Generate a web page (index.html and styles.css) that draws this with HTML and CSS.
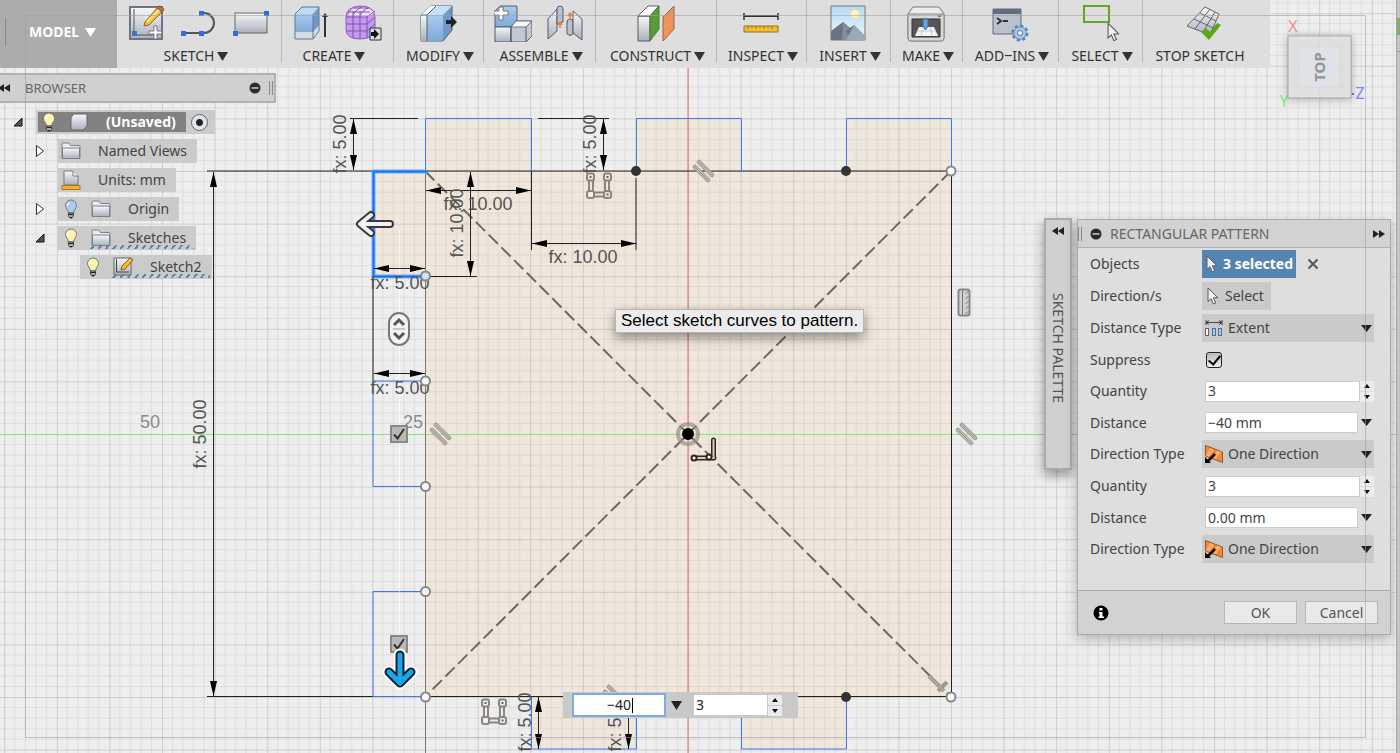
FILE: index.html
```html
<!DOCTYPE html>
<html lang="en">

<head>
    <meta charset="UTF-8">
    <meta name="viewport" content="width=device-width, initial-scale=1.0">
    <title>Sketch - Rectangular Pattern</title>

    <link rel="stylesheet" href="styles.css">
</head>

<body>
    <!-- shared gradients and symbols -->
    <svg class="defs" aria-hidden="true">
        <defs>
            <linearGradient id="steel" x1="0" y1="0" x2="0" y2="1">
                <stop offset="0" stop-color="#f7f8fa" />
                <stop offset="1" stop-color="#a9b0bd" />
            </linearGradient>
            <linearGradient id="blue" x1="0" y1="0" x2="0" y2="1">
                <stop offset="0" stop-color="#a9cbee" />
                <stop offset="1" stop-color="#7fa9d8" />
            </linearGradient>
            <linearGradient id="sky" x1="0" y1="0" x2="0" y2="1">
                <stop offset="0" stop-color="#b5daf5" />
                <stop offset="1" stop-color="#edf7fd" />
            </linearGradient>
            <symbol id="folder" viewBox="0 0 20 18">
                <path d="M1 16.500V2q0-1 1-1h6l1.500 2.500H18q1 0 1 1v12z" fill="#e8ebef" stroke="#7b818b" />
                <path d="M1.500 6h17v10.500h-17z" fill="url(#steel)" stroke="#7b818b" />
            </symbol>
            <symbol id="bulb" viewBox="0 0 14 20">
                <path d="M7 1a5.500 5.500 0 0 0-5.500 5.500C1.500 9.500 4 10.500 4.500 14h5c.5-3.500 3-4.500 3-7.500A5.500 5.500 0 0 0 7 1z" fill="currentColor" stroke="#777" />
                <path d="M5 4q-1.500 1-1.500 3" stroke="#fff" fill="none" stroke-width="1.500" />
                <path d="M4.500 14h5v3.500L8 19H6l-1.500-1.500z" fill="#aaa" stroke="#444" />
                <path d="M5 15.500h4M6 18.500h2" stroke="#222" />
            </symbol>
            <symbol id="pointer" viewBox="0 0 12 18">
                <path d="M1 1v13.500l3-2.800 2.300 5.300 2.400-1-2.300-5.200H11z" fill="#eef0f4" stroke="#55595f" />
            </symbol>
            <symbol id="down" viewBox="0 0 11 9">
                <path d="M0 0h11L5.500 9z" fill="currentColor" />
            </symbol>
            <symbol id="collapse" viewBox="0 0 12 12">
                <circle cx="6" cy="6" r="5.500" fill="#2b2b2b" />
                <path d="M2.500 6h7" stroke="#ccc" stroke-width="1.500" />
            </symbol>
            <symbol id="rewind" viewBox="0 0 12 8">
                <path d="M6 0v8L0 4zM12 0v8L6 4z" fill="#222" />
            </symbol>
            <symbol id="one-direction" viewBox="0 0 20 20">
                <path d="M1.500 1.500L18.500 8V18.500L1.500 12z" fill="#f58634" stroke="#8f5a33" />
                <path d="M6 4l4 1.500-5 7-3-1zM13 6.500l4 1.500-5 7-3-1z" fill="#ffad6c" />
                <path d="M11 10L4 17" stroke="#000" stroke-width="2.500" />
                <path d="M1 13v6h6z" fill="#000" />
            </symbol>
            <symbol id="parallel" viewBox="0 0 26 26">
                <g stroke-linecap="round" fill="none">
                    <path d="M4 8L17 21M8 3L21 16" stroke="#9d9992" stroke-width="4.500" />
                    <path d="M4 8L17 21M8 3L21 16" stroke="#c3bfb8" stroke-width="2.500" />
                    <path d="M4 8L17 21M8 3L21 16" stroke="#99958e" stroke-width="1" />
                </g>
            </symbol>
            <symbol id="rigid" viewBox="0 0 30 30">
                <g fill="none" stroke="#8b867f" stroke-width="2" stroke-linejoin="round">
                    <path d="M5 9v11M9 9v11M21 9v11M25 9v11M10 21.500h10M10 25.500h10" />
                    <rect x="3" y="2.500" width="7" height="7" rx="2" />
                    <rect x="20" y="2.500" width="7" height="7" rx="2" />
                    <rect x="20" y="20" width="7" height="7" rx="2" />
                    <rect x="3" y="20" width="7" height="7" rx="2" fill="#f3f0ec" />
                </g>
                <path d="M5.500 5h2v2h-2zM22.500 5h2v2h-2zM22.500 22.500h2v2h-2z" fill="#666" />
            </symbol>
            <symbol id="suppress" viewBox="0 0 18 18">
                <rect x="1" y="1" width="16" height="16" fill="#b8b8b8" stroke="#888" stroke-width="2" />
                <path d="M4 9.500l3.500 4L14 4" fill="none" stroke="#333" stroke-width="2" />
            </symbol>
            <marker id="tip" viewBox="0 0 15 7" markerWidth="15" markerHeight="7" markerUnits="userSpaceOnUse" refX="15" refY="3.500" orient="auto-start-reverse">
                <path d="M0 0L15 3.500L0 7z" fill="#000" />
            </marker>
            <pattern id="grid" x="688" y="434" width="52.600" height="52.600" patternUnits="userSpaceOnUse">
                <path d="M10.500 0v53M21 0v53M31.600 0v53M42.100 0v53M0 10.500h53M0 21h53M0 31.600h53M0 42.100h53" stroke="#000" stroke-opacity=".07" />
                <path d="M.5 0v53M0 .5h53" stroke="#000" stroke-opacity=".13" />
            </pattern>
        </defs>
    </svg>

    <main class="workspace">
        <!-- sketch canvas -->
        <svg class="canvas" role="img" aria-label="Sketch canvas">
            <path class="profile" d="M425 171V118.500H531V171H636V118.500H741V171H846V118.500H951.500V697H846V749H741V697H636V749H531V697H425V276H373V171z" />
            <rect width="100%" height="100%" fill="url(#grid)" />
            <path class="axis-y" d="M0 434.500H2000" />
            <path class="axis-x" d="M688 0V1200" />

            <g class="diagonals">
                <path d="M425 171L951 697M951 171L425 697" />
            </g>

            <path class="edge-soft" d="M425.500 171V1200" />
            <path class="edge" d="M207 171H951.500V697M207 696.500H951.500M373 276V381" />
            <path class="curve" d="M425.500 171V118.500H531.500V171M636.500 171V118.500H741.500V171M846.500 171V118.500H951.500V171M531.500 697V749H636.500V697M741.500 697V749H846.500V697M425 381H373V486.500H425M425 591.500H373V696.500H425" />
            <path class="guide" d="M399.500 230V650" />
            <path class="picked-glow" d="M427 171.500H373.500V276.500H427" />
            <path class="picked" d="M427 171.500H373.500V276.500H427" />

            <g class="extension">
                <path d="M350 118.500H418M538 118.500H609M425 276.500H477M531.500 171V250M636 178V250" />
            </g>
            <g class="dimension">
                <path d="M213.500 172V696" />
                <path d="M353.500 119V170" />
                <path d="M603.500 119V170" />
                <path d="M426 190.500H531" />
                <path d="M470.500 172V276" />
                <path d="M532 243.500H636" />
                <path d="M374 268.500H425" />
                <path d="M374 373.500H425" />
                <path d="M538.500 697V749" />
                <path d="M628.500 697V749" />
            </g>
            <g class="measure">
                <text x="478" y="210">fx: 10.00</text>
                <text x="583" y="263">fx: 10.00</text>
                <text x="400" y="289">fx: 5.00</text>
                <text x="400" y="394">fx: 5.00</text>
                <text transform="translate(206 434) rotate(-90)">fx: 50.00</text>
                <text transform="translate(346 144) rotate(-90)">fx: 5.00</text>
                <text transform="translate(596 144) rotate(-90)">fx: 5.00</text>
                <text transform="translate(463 223) rotate(-90)">fx: 10.00</text>
                <text transform="translate(531 722) rotate(-90)">fx: 5.00</text>
                <text transform="translate(621 722) rotate(-90)">fx: 5.00</text>
                <text class="tick" x="150" y="428">50</text>
                <text class="tick" x="413" y="428">25</text>
            </g>

            <!-- constraint glyphs -->
            <use href="#parallel" x="691" y="159" width="26" height="26" />
            <use href="#parallel" x="428" y="422" width="26" height="26" />
            <use href="#parallel" x="954" y="422" width="26" height="26" />
            <use href="#parallel" x="601" y="684" width="26" height="26" />
            <use href="#rigid" x="584" y="171" width="30" height="30" />
            <use href="#rigid" x="479" y="697" width="30" height="30" />
            <g fill="none" stroke="#777">
                <rect x="958.500" y="289.500" width="11" height="26" rx="2" fill="#d2d2d2" stroke="#888" stroke-width="2" />
                <path d="M962.500 290v25M965.500 294l3-3M965.500 299l3-3M965.500 304l3-3M965.500 309l3-3M965.500 314l3-3" />
            </g>
            <g fill="none" stroke="#565656">
                <rect x="389" y="313" width="20" height="32" rx="10" fill="#f3f3f3" stroke="#777" stroke-width="2" />
                <path d="M394 325l5-5 5 5M394 333l5 5 5-5" stroke-width="3" />
                <path d="M393 329h12" stroke="#999" />
            </g>
            <path d="M929 676l15 15M938 691l9-9" stroke="#9d9992" stroke-width="4" />
            <path d="M929 676l15 15" stroke="#c6beb4" />

            <!-- origin -->
            <circle cx="688" cy="434" r="10" fill="none" stroke="#969284" stroke-opacity=".7" stroke-width="4" />
            <circle cx="688" cy="434" r="6" fill="#000" />
            <g stroke="#33261f" fill="none" stroke-linecap="round">
                <path d="M694 458h20M713.500 440v18" stroke-width="5" />
                <path d="M694 458h20M713.500 440v18" stroke="#d8cdc3" stroke-width="2" />
                <circle cx="694" cy="458" r="2.500" fill="#fff" stroke-width="2" />
                <circle cx="709" cy="457" r="2.500" fill="#fff" stroke-width="2" />
            </g>

            <g class="node-fixed">
                <circle cx="636" cy="171" r="5" />
                <circle cx="846" cy="171" r="5" />
                <circle cx="636" cy="697" r="5" />
                <circle cx="846" cy="697" r="5" />
            </g>
            <g class="node">
                <circle cx="951" cy="171" r="4.500" />
                <circle cx="951" cy="697" r="4.500" />
                <circle class="node-picked" cx="425.500" cy="276" r="4.500" />
                <circle cx="425.500" cy="381" r="4.500" />
                <circle cx="425.500" cy="486.500" r="4.500" />
                <circle cx="425.500" cy="591.500" r="4.500" />
                <circle cx="425.500" cy="697" r="4.500" />
            </g>

            <!-- manipulators -->
            <use href="#suppress" x="390" y="425" width="18" height="18" />
            <use href="#suppress" x="390" y="635" width="18" height="18" />
            <g class="handle">
                <path class="handle-line" d="M390 224H362M371 215L360 224L371 233" />
                <path class="handle-fill" d="M390 224H362M371 215L360 224L371 233" />
            </g>
            <g class="handle">
                <path class="handle-halo" d="M400 655V680M389 672L400 683L411 672" />
                <path class="active-line" d="M400 655V680M389 672L400 683L411 672" />
                <path class="active-fill" d="M400 655V680M389 672L400 683L411 672" />
            </g>
        </svg>

        <header class="toolbar">
            <button class="workspace-switch"><span class="grip"></span>MODEL <svg width="11" height="9"><use href="#down" /></svg></button>
            <div class="tool-group sketch">
                <div class="tools">
                    <svg width="38" height="38" viewBox="0 0 38 38">
                        <rect x="2" y="3" width="32" height="32" fill="url(#steel)" stroke="#6d7581" stroke-width="2" />
                        <path d="M6 5v26h24" fill="none" stroke="#555" />
                        <path d="M4 27h5v5H4z" fill="#3978c8" />
                        <path d="M17 18L29 4l5 4-13 13-5 1z" fill="#f5bd2c" stroke="#8d6826" />
                        <path d="M29 4l2-2q4 0 5 4l-2 2z" fill="#c3694a" stroke="#84523f" />
                        <path d="M19 18L31 6" stroke="#ffe78a" stroke-width="2" />
                        <path d="M26 22h3v5h5v3h-5v5h-3v-5h-5v-3h5z" fill="#fff" stroke="#777" />
                    </svg>
                    <svg width="38" height="38" viewBox="0 0 38 38">
                        <path d="M4 29h20a10 10 0 0 0 0-20h-4" fill="none" stroke="#555" stroke-width="2" />
                        <path d="M1 27h5v5H1zM19 27h5v5h-5zM19 7h5v5h-5z" fill="#2f6fd0" />
                    </svg>
                    <svg width="38" height="38" viewBox="0 0 38 38">
                        <rect x="3" y="9" width="32" height="20" fill="url(#steel)" stroke="#666" />
                        <path d="M1 27h5v5H1zM32 7h5v5h-5z" fill="#2f6fd0" />
                    </svg>
                </div>
                <button>SKETCH <svg width="11" height="9"><use href="#down" /></svg></button>
            </div>
            <div class="tool-group create">
                <div class="tools">
                    <svg width="38" height="38" viewBox="0 0 38 38">
                        <path d="M3 10l7-7h17v24l-6 8H3z" fill="#7098c6" />
                        <path d="M3 10h18v18H3z" fill="url(#blue)" />
                        <path d="M3 10l7-7h17l-6 7z" fill="#bddaf4" />
                        <path d="M3 28h18l6-7v6l-6 8H3z" fill="#d7dce3" />
                        <path d="M3 10l7-7h17v24l-6 8H3zM21 10v25" fill="none" stroke="#5d7896" />
                        <path d="M33 33V13" stroke="#333" stroke-width="2" />
                        <path d="M30 13l3-4 3 4z" fill="#333" />
                    </svg>
                    <svg width="38" height="38" viewBox="0 0 38 38">
                        <path d="M2 13q0-10 14-11 14 0 15 10v11q0 12-15 12Q2 35 2 25z" fill="#c49aee" stroke="#8a5fba" />
                        <path d="M4 12q3-9 13-9 9 0 13 6l-6 4z" fill="#f0e1fd" />
                        <path d="M2 13h21l8-6M2 20h21l8-7M2 27h21l8-7M9 7v27M16 7v28M23 12v22M9 13q0-6 9-10M16 13q1-7 9-9M4 8h22M10 4h14" fill="none" stroke="#7f52b0" />
                        <path d="M26 24h11v12H26z" fill="#ddd" stroke="#333" />
                        <path d="M27 28h3v-3l5 5-5 5v-3h-3z" fill="#111" />
                    </svg>
                </div>
                <button>CREATE <svg width="11" height="9"><use href="#down" /></svg></button>
            </div>
            <div class="tool-group modify">
                <div class="tools">
                    <svg width="38" height="38" viewBox="0 0 38 38">
                        <path d="M2 11l9-9h22v24l-9 11H2z" fill="#6d9aca" stroke="#52606f" />
                        <path d="M2 11h6v26H2z" fill="url(#steel)" />
                        <path d="M2 11l9-9h6l-9 9z" fill="#fff" />
                        <path d="M8 11h16v26H8z" fill="url(#blue)" />
                        <path d="M8 11l9-9h16l-9 9z" fill="#c7e0f6" />
                        <path d="M8 37V11l9-9M2 11h6" fill="none" stroke="#52606f" />
                        <path d="M27 16h5v-4l6 6-6 6v-4h-5z" fill="#222" />
                    </svg>
                </div>
                <button>MODIFY <svg width="11" height="9"><use href="#down" /></svg></button>
            </div>
            <div class="tool-group assemble">
                <div class="tools">
                    <svg width="38" height="38" viewBox="0 0 38 38">
                        <path d="M1 7l5-5h17v16l-6 5H1z" fill="url(#blue)" stroke="#52606f" />
                        <path d="M1 23h16v15H1z" fill="url(#steel)" stroke="#52606f" />
                        <path d="M17 23l5-6h16v15l-6 6H17z" fill="#c3c9d3" stroke="#52606f" />
                        <path d="M17 23l5-6h16l-6 6z" fill="#f5f6f8" stroke="#777" />
                        <path d="M17 23v15M32 23v15" stroke="#52606f" />
                        <path d="M5 3h4v4h5v4H9v5H5v-5H0V7h5z" fill="#fff" stroke="#777" />
                    </svg>
                    <svg width="38" height="38" viewBox="0 0 38 38">
                        <path d="M2 15l9-10v22L2 35z" fill="url(#steel)" stroke="#555c66" />
                        <path d="M11 5q0-3 3-3t3 3v13l-6 2z" fill="#b8c0cb" stroke="#555c66" />
                        <path d="M21 18q0-3 3-3t3 3v12q-3 3-6 0z" fill="#b8c0cb" stroke="#555c66" />
                        <path d="M27 7l9 8v21l-9-7z" fill="url(#steel)" stroke="#555c66" />
                        <path d="M14 24v-5m-2 2l2-3 2 3M24 16v-6m-2 2l2-3 2 3" fill="none" stroke="#ef7e31" stroke-width="1.500" />
                    </svg>
                </div>
                <button>ASSEMBLE <svg width="11" height="9"><use href="#down" /></svg></button>
            </div>
            <div class="tool-group construct">
                <div class="tools">
                    <svg width="38" height="38" viewBox="0 0 38 38">
                        <path d="M1 12h12v25H1z" fill="url(#steel)" stroke="#555c66" />
                        <path d="M1 12L11 2h11l-9 10z" fill="#fff" stroke="#555c66" />
                        <path d="M13 12l9-10v23l-9 12z" fill="#5b9b3d" stroke="#477c2f" />
                        <path d="M26 13L37 2v23L26 37z" fill="#ef935b" stroke="#9f6042" />
                    </svg>
                </div>
                <button>CONSTRUCT <svg width="11" height="9"><use href="#down" /></svg></button>
            </div>
            <div class="tool-group inspect">
                <div class="tools">
                    <svg width="38" height="38" viewBox="0 0 38 38">
                        <path d="M2 9v7M36 9v7" stroke="#333" stroke-width="1.500" />
                        <path d="M2 12h34" stroke="#333" stroke-width="2" />
                        <path d="M2 22h34v6H2z" fill="#f4be2d" stroke="#98701f" />
                        <path d="M6 22v3M10 22v2M14 22v3M18 22v2M22 22v3M26 22v2M30 22v3" stroke="#98701f" />
                    </svg>
                </div>
                <button>INSPECT <svg width="11" height="9"><use href="#down" /></svg></button>
            </div>
            <div class="tool-group insert">
                <div class="tools">
                    <svg width="38" height="38" viewBox="0 0 38 38">
                        <path d="M2 2h34v34H2z" fill="url(#sky)" stroke="#777" />
                        <circle cx="26" cy="10" r="4.500" fill="#fff5bf" stroke="#fbdc83" />
                        <path d="M2 27l12-9 7 6 4-3 11 11v4H2z" fill="#6b7482" />
                        <path d="M14 18l7 6-4 3 5 9h-9z" fill="#848d9a" />
                        <path d="M17 36l8-15 11 11v4z" fill="#9ba8b6" />
                    </svg>
                </div>
                <button>INSERT <svg width="11" height="9"><use href="#down" /></svg></button>
            </div>
            <div class="tool-group make">
                <div class="tools">
                    <svg width="38" height="38" viewBox="0 0 38 38">
                        <path d="M1 10l5-7h26l5 7v24q0 3-3 3H4q-3 0-3-3z" fill="#ececec" stroke="#777" />
                        <path d="M1 10h36v24q0 3-3 3H4q-3 0-3-3z" fill="#d7d7d7" stroke="#888" />
                        <path d="M5 15h28v18H5z" fill="#555" stroke="#333" />
                        <path d="M12 23h15l4 9H8z" fill="#f2f2f2" />
                        <path d="M10 27h19M16 23l-2 9M23 23l2 9" stroke="#ccc" />
                        <path d="M16 15h5v7l-2.500 4-2.500-4z" fill="#68a5df" stroke="#356b9e" />
                        <path d="M31 12h3" stroke="#48a530" stroke-width="2" />
                    </svg>
                </div>
                <button>MAKE <svg width="11" height="9"><use href="#down" /></svg></button>
            </div>
            <div class="tool-group addins">
                <div class="tools">
                    <svg width="38" height="38" viewBox="0 0 38 38">
                        <path d="M2 5h28v25H2z" fill="#bac1ce" stroke="#626b79" />
                        <path d="M2 5h28v5H2z" fill="#626d7e" />
                        <path d="M6 14l4 3-4 3M12 17h5" fill="none" stroke="#333" stroke-width="2" />
                        <circle cx="29" cy="29" r="7" fill="#93b7dd" stroke="#5b83b1" stroke-width="3" stroke-dasharray="3 2.500" />
                        <circle cx="29" cy="29" r="6" fill="#a9c8e8" stroke="#7399c4" />
                        <circle cx="29" cy="29" r="2.500" fill="#fff" stroke="#4d719b" />
                    </svg>
                </div>
                <button>ADD‒INS <svg width="11" height="9"><use href="#down" /></svg></button>
            </div>
            <div class="tool-group select">
                <div class="tools">
                    <svg width="38" height="38" viewBox="0 0 38 38">
                        <path d="M3 2h25v16H3z" fill="none" stroke="#62a81d" stroke-width="2" />
                        <use href="#pointer" x="26" y="18" width="13" height="20" />
                    </svg>
                </div>
                <button>SELECT <svg width="11" height="9"><use href="#down" /></svg></button>
            </div>
            <div class="tool-group stop">
                <div class="tools">
                    <svg width="38" height="38" viewBox="0 0 38 38">
                        <path d="M20 3l14 7-9 21-23-9z" fill="url(#steel)" stroke="#666" />
                        <path d="M15 9l16 8M9 15l19 9M25 5L10 25M30 8L18 28" stroke="#666" fill="none" />
                        <path d="M16 28l5-4 4 4 7-9 4 2-12 15z" fill="#58a818" />
                    </svg>
                </div>
                <button>STOP SKETCH</button>
            </div>
        </header>

        <aside class="browser">
            <div class="browser-head">
                <svg width="12" height="8"><use href="#rewind" /></svg>
                <h2>BROWSER</h2>
                <svg width="12" height="12"><use href="#collapse" /></svg>
                <span class="grip"></span>
            </div>
            <ul class="tree">
                <li class="root">
                    <svg class="twist" width="10" height="10"><path d="M9 1v8H1z" fill="#555" stroke="#111" /></svg>
                    <div class="node-chip">
                        <div class="current">
                            <svg class="bulb" width="14" height="20"><use href="#bulb" /></svg>
                            <svg width="20" height="18" viewBox="0 0 20 18"><path d="M2 5q0-1 3-4h12q1 0 1 1v11l-4 4H3q-1 0-1-1z" fill="url(#steel)" stroke="#666" /></svg>
                            <span>(Unsaved)</span>
                        </div>
                        <input type="radio" name="active" aria-label="Activate component" checked>
                    </div>
                </li>
                <li>
                    <svg class="twist" width="10" height="14"><path d="M1.500 1.500v11L8.500 7z" fill="#fff" stroke="#333" /></svg>
                    <div class="node-chip"><svg width="20" height="18"><use href="#folder" /></svg><span>Named Views</span></div>
                </li>
                <li>
                    <span class="twist"></span>
                    <div class="node-chip">
                        <svg width="20" height="20" viewBox="0 0 20 20">
                            <path d="M3 15V1h9l5 5v9z" fill="url(#steel)" stroke="#777" />
                            <path d="M12 1v5h5" fill="#fff" stroke="#777" />
                            <path d="M1 15.500h18v4H1z" fill="#f0b02c" stroke="#a87720" />
                        </svg>
                        <span>Units: mm</span>
                    </div>
                </li>
                <li>
                    <svg class="twist" width="10" height="14"><path d="M1.500 1.500v11L8.500 7z" fill="#fff" stroke="#333" /></svg>
                    <div class="node-chip"><svg class="bulb off" width="14" height="20"><use href="#bulb" /></svg><svg width="20" height="18"><use href="#folder" /></svg><span>Origin</span></div>
                </li>
                <li>
                    <svg class="twist" width="10" height="10"><path d="M9 1v8H1z" fill="#555" stroke="#111" /></svg>
                    <div class="node-chip pending"><svg class="bulb" width="14" height="20"><use href="#bulb" /></svg><svg width="20" height="18"><use href="#folder" /></svg><span>Sketches</span></div>
                </li>
                <li class="leaf">
                    <span class="twist"></span>
                    <div class="node-chip pending">
                        <svg class="bulb" width="14" height="20"><use href="#bulb" /></svg>
                        <svg width="20" height="20" viewBox="0 0 20 20">
                            <path d="M1 1h17v17H1z" fill="url(#steel)" stroke="#666" />
                            <path d="M3.500 2v13H16" fill="none" stroke="#444" />
                            <path d="M8 13l1-4 8-8 3 2-8 9z" fill="#f5bd2c" stroke="#82601f" />
                        </svg>
                        <span>Sketch2</span>
                    </div>
                </li>
            </ul>
        </aside>

        <svg class="viewcube" width="100" height="120" viewBox="0 0 100 120" role="img" aria-label="View cube, top">
            <text x="27" y="23" fill="#f58b8b" text-anchor="middle">X</text>
            <text x="18" y="98" fill="#7bec7b" text-anchor="middle">Y</text>
            <text x="94" y="90" fill="#7b8df0" text-anchor="middle">Z</text>
            <rect class="face" x="22" y="27" width="63" height="62" />
            <rect x="34" y="39" width="38" height="38" fill="#dfe2e6" />
            <path d="M86 84h2v2h-2z" fill="#5a6df0" />
            <text class="face-label" transform="translate(59 58) rotate(-90)">TOP</text>
        </svg>

        <button class="palette-tab">
            <svg width="12" height="8"><use href="#rewind" /></svg>
            <span>SKETCH PALETTE</span>
        </button>

        <form class="panel">
            <div class="panel-head">
                <span class="grip"></span>
                <svg width="12" height="12"><use href="#collapse" /></svg>
                <h2>RECTANGULAR PATTERN</h2>
                <svg class="flip" width="12" height="8"><use href="#rewind" /></svg>
            </div>
            <div class="panel-body">
                <div class="row">
                    <label for="objects">Objects</label>
                    <button type="button" id="objects" class="pick active"><svg width="12" height="18"><use href="#pointer" /></svg>3 selected</button>
                    <button type="button" class="clear" aria-label="Clear objects"><svg width="12" height="12" viewBox="0 0 12 12"><path d="M1.500 1.500l9 9M10.500 1.500l-9 9" stroke="#555" stroke-width="2" /></svg></button>
                </div>
                <div class="row">
                    <label for="directions">Direction/s</label>
                    <button type="button" id="directions" class="pick"><svg width="12" height="18"><use href="#pointer" /></svg>Select</button>
                </div>
                <div class="row">
                    <label for="distance-type">Distance Type</label>
                    <div class="dropdown">
                        <svg width="20" height="18" viewBox="0 0 20 18">
                            <path d="M2 1v5M18 1v5M2 3.500h16M5 1.500l-3 2 3 2M15 1.500l3 2-3 2" fill="none" stroke="#444" />
                            <rect x="1.500" y="9.500" width="3" height="7" fill="#fff" stroke="#666" />
                            <rect x="8.500" y="9.500" width="3" height="7" fill="#a9c9ec" stroke="#4c739f" />
                            <rect x="14.500" y="9.500" width="3" height="7" fill="#a9c9ec" stroke="#4c739f" />
                        </svg>
                        <select id="distance-type"><option>Extent</option><option>Spacing</option></select>
                        <svg width="11" height="7" viewBox="0 0 11 9" preserveAspectRatio="none"><use href="#down" width="11" height="9" /></svg>
                    </div>
                </div>
                <div class="row short">
                    <label for="suppress-box">Suppress</label>
                    <input type="checkbox" id="suppress-box" checked>
                </div>
                <div class="row">
                    <label for="qty-1">Quantity</label>
                    <input type="text" id="qty-1" value="3">
                    <div class="spin"><button type="button" aria-label="More"></button><button type="button" aria-label="Less"></button></div>
                </div>
                <div class="row short">
                    <label for="dist-1">Distance</label>
                    <input type="text" id="dist-1" value="−40 mm">
                    <button type="button" class="more" aria-label="Distance options"><svg width="11" height="7" viewBox="0 0 11 9" preserveAspectRatio="none"><use href="#down" width="11" height="9" /></svg></button>
                </div>
                <div class="row">
                    <label for="dir-1">Direction Type</label>
                    <div class="dropdown">
                        <svg width="20" height="20"><use href="#one-direction" /></svg>
                        <select id="dir-1"><option>One Direction</option><option>Symmetric</option></select>
                        <svg width="11" height="7" viewBox="0 0 11 9" preserveAspectRatio="none"><use href="#down" width="11" height="9" /></svg>
                    </div>
                </div>
                <div class="row">
                    <label for="qty-2">Quantity</label>
                    <input type="text" id="qty-2" value="3">
                    <div class="spin"><button type="button" aria-label="More"></button><button type="button" aria-label="Less"></button></div>
                </div>
                <div class="row short">
                    <label for="dist-2">Distance</label>
                    <input type="text" id="dist-2" value="0.00 mm">
                    <button type="button" class="more" aria-label="Distance options"><svg width="11" height="7" viewBox="0 0 11 9" preserveAspectRatio="none"><use href="#down" width="11" height="9" /></svg></button>
                </div>
                <div class="row">
                    <label for="dir-2">Direction Type</label>
                    <div class="dropdown">
                        <svg width="20" height="20"><use href="#one-direction" /></svg>
                        <select id="dir-2"><option>One Direction</option><option>Symmetric</option></select>
                        <svg width="11" height="7" viewBox="0 0 11 9" preserveAspectRatio="none"><use href="#down" width="11" height="9" /></svg>
                    </div>
                </div>
            </div>
            <div class="panel-foot">
                <svg width="16" height="16" viewBox="0 0 16 16" role="img" aria-label="Info">
                    <circle cx="8" cy="8" r="7.500" fill="#000" />
                    <path d="M6.500 3h3v2.500h-3zM6 7h3.500v4.500H11V13H5.500v-1.500h1V8.500H6z" fill="#fff" />
                </svg>
                <button type="button">OK</button>
                <button type="button">Cancel</button>
            </div>
        </form>

        <div class="tooltip">Select sketch curves to pattern.</div>

        <div class="quick-edit">
            <input type="text" class="focused" aria-label="Distance" value="−40">
            <span class="caret"></span>
            <svg width="11" height="9"><use href="#down" /></svg>
            <input type="text" aria-label="Quantity" value="3">
            <div class="spin"><button type="button" aria-label="More"></button><button type="button" aria-label="Less"></button></div>
        </div>

        <div class="side-strip"></div>
        <div class="frame"></div>
    </main>
</body>

</html>
```
FILE: styles.css
```css
* {
    box-sizing: border-box;
}

body {
    margin: 0;
    background-color: #eee;
    color: #444;
    font-family: "Noto Sans", "Open Sans", sans-serif;
    font-size: 14px;
    line-height: 20px;
}

button,
input,
select {
    font: inherit;
    color: inherit;
    border: none;
    margin: 0;
    padding: 0;
}

button {
    background: none;
    cursor: pointer;
    white-space: nowrap;
}

h2 {
    margin: 0;
    font-size: 14px;
    font-weight: normal;
    color: #666;
}

svg {
    flex: none;
}

.defs {
    position: absolute;
    width: 0;
    height: 0;
}

.workspace {
    position: relative;
    height: 100vh;
    overflow: hidden;
}

/* canvas */
.canvas {
    position: absolute;
    inset: 0;
    width: 100%;
    height: 100%;
}

.profile {
    fill: #f0e7dc;
}

.axis-x {
    stroke: #f0665c;
}

.axis-y {
    stroke: #86e77d;
}

.diagonals {
    stroke: #6f6862;
    stroke-width: 2;
    stroke-dasharray: 13 5;
}

.edge,
.extension,
.dimension {
    fill: none;
    stroke: #222;
}

.edge-soft {
    stroke: #777;
}

.curve {
    fill: none;
    stroke: #3c78f0;
}

.guide {
    stroke: #fff;
    stroke-opacity: .6;
}

.picked-glow {
    fill: none;
    stroke: #6fb0ff;
    stroke-width: 4;
}

.picked {
    fill: none;
    stroke: #1672f5;
    stroke-width: 2;
}

.dimension path {
    marker-start: url(#tip);
    marker-end: url(#tip);
}

.measure {
    font-family: "Liberation Sans", Arial, sans-serif;
    font-size: 18px;
    fill: #555;
    text-anchor: middle;
}

.tick {
    fill: #8c8c8c;
}

.node-fixed {
    fill: #333;
}

.node {
    fill: #f8f8f8;
    stroke: #888;
    stroke-width: 2;
}

.node-picked {
    fill: #cfe2fb;
}

.handle {
    fill: none;
    stroke-linecap: round;
    stroke-linejoin: round;
}

.handle-line {
    stroke: #3a3a3a;
    stroke-width: 8;
}

.handle-fill {
    stroke: #f2f2f2;
    stroke-width: 4;
}

.handle-halo {
    stroke: #fff;
    stroke-width: 13;
}

.active-line {
    stroke: #0d2430;
    stroke-width: 9;
}

.active-fill {
    stroke: #18a5ec;
    stroke-width: 5;
}

/* toolbar */
.toolbar {
    position: relative;
    display: flex;
    width: max-content;
    height: 68px;
    background-color: #dedede;
}

.workspace-switch {
    display: flex;
    align-items: center;
    gap: 6px;
    width: 117px;
    padding: 0 0 4px 4px;
    background-color: #acacac;
    color: #fff;
    font-weight: bold;
}

.grip {
    width: 4px;
    height: 14px;
    border-left: 1px solid #888;
    border-right: 1px solid #888;
}

.workspace-switch .grip {
    width: 2px;
    height: 28px;
    border-left: none;
    margin-right: 17px;
}

.tool-group {
    display: flex;
    flex-direction: column;
    align-items: center;
    padding-top: 4px;
}

.tool-group + .tool-group {
    background: linear-gradient(#b8b8b8, #b8b8b8) left top / 1px 62px no-repeat;
}

.tools {
    display: flex;
    gap: 14px;
    height: 42px;
}

.tool-group button {
    display: flex;
    align-items: center;
    gap: 3px;
    padding-left: 4px;
    color: #333;
}

.sketch {
    width: 164px;
}

.create,
.assemble {
    width: 112px;
}

.tool-group.sketch button,
.tool-group.create button {
    padding: 0 6px 0 0;
}

.modify,
.inspect {
    width: 90px;
}

.construct {
    width: 121px;
}

.insert,
.select {
    width: 84px;
}

.make {
    width: 72px;
}

.addins {
    width: 96px;
}

.stop {
    width: 128px;
    padding-right: 4px;
}

.tool-group.stop button {
    padding: 0 8px 0 0;
}

/* browser tree */
.browser {
    position: absolute;
    top: 73px;
    left: 0;
}

.browser-head {
    display: flex;
    align-items: center;
    width: 276px;
    height: 30px;
    padding-right: 1px;
    background-color: #d0d0d0;
    border: 2px solid #b2b2b2;
    border-left: none;
}

.browser-head svg:first-child {
    margin-left: -2px;
}

.browser-head h2 {
    flex: 1;
    padding-left: 15px;
    font-size: 13px;
}

.browser-head .grip {
    margin-left: 8px;
}

.tree {
    display: flex;
    flex-direction: column;
    gap: 5px;
    margin: 7px 0 0;
    padding: 0 0 0 35px;
    list-style: none;
}

.tree li {
    display: flex;
    align-items: center;
}

.tree .root {
    margin-left: -22px;
}

.tree .leaf {
    margin-left: 22px;
}

.twist {
    width: 10px;
    margin-right: 13px;
}

.node-chip {
    display: flex;
    align-items: center;
    position: relative;
    height: 24px;
    padding: 0 10px 0 3px;
    background-color: #cbcbcb;
}

.node-chip span {
    padding-left: 17px;
}

.bulb {
    margin: 0 13px 0 3px;
    color: #fdf2b0;
}

.bulb.off {
    color: #a8cdf2;
}

.root .node-chip {
    gap: 5px;
    padding: 0 7px 0 2px;
}

.current {
    display: flex;
    align-items: center;
    height: 20px;
    padding: 0 10px 0 1px;
    background-color: #828282;
    color: #fff;
    font-weight: bold;
}

.tree input {
    appearance: none;
    width: 17px;
    height: 17px;
    border: 1px solid #666;
    border-radius: 50%;
    background: radial-gradient(circle, #222 3px, #dfe5ee 4px);
}

.pending::after {
    content: "";
    position: absolute;
    right: 2px;
    bottom: 1px;
    left: 30px;
    height: 4px;
    background: repeating-linear-gradient(125deg, transparent 0 4px, #6583b0 4px 6px);
}

/* view cube */
.viewcube {
    position: absolute;
    top: 9px;
    right: 34px;
    font-size: 16px;
}

.face {
    fill: #e8e8e8;
    fill-opacity: .8;
    stroke: #a6a6a6;
    stroke-width: 1;
    filter: drop-shadow(0 1px 4px rgba(0, 0, 0, 0.3));
}

.face-label {
    fill: #92969b;
    font-size: 15px;
    font-weight: bold;
    text-anchor: middle;
}

/* sketch palette */
.palette-tab {
    position: absolute;
    top: 218px;
    right: 328px;
    display: flex;
    flex-direction: column;
    align-items: center;
    gap: 58px;
    width: 28px;
    height: 252px;
    padding-top: 7px;
    background-color: #d0d0d0;
    border: 2px solid #aaa;
    box-shadow: 0 5px 12px rgba(0, 0, 0, 0.4);
}

.palette-tab span {
    writing-mode: vertical-rl;
    color: #555;
}

/* pattern panel */
.panel {
    position: absolute;
    top: 219px;
    right: 9px;
    width: 314px;
    background-color: #dedede;
    border: 1px solid #aaa;
    box-shadow: 0 4px 12px rgba(0, 0, 0, 0.25);
}

.panel-head {
    display: flex;
    align-items: center;
    gap: 8px;
    height: 28px;
    padding: 0 5px 0 0;
    background-color: #d2d2d2;
    border-bottom: 1px solid #b2b2b2;
}

.panel-head h2 {
    flex: 1;
}

.flip {
    transform: scaleX(-1);
}

.panel-body {
    padding-bottom: 25px;
}

.row {
    display: flex;
    align-items: center;
    height: 32px;
    padding: 0 16px 0 12px;
}

.row.short {
    height: 31px;
}

.row label {
    flex: none;
    width: 112px;
}

.pick {
    display: flex;
    align-items: center;
    gap: 6px;
    height: 28px;
    padding: 0 7px 0 5px;
    background-color: #cacaca;
}

.pick.active {
    gap: 5px;
    padding: 0 3px 0 4px;
    background-color: #5586b3;
    color: #fff;
    font-weight: bold;
}

.clear {
    display: flex;
    margin-left: 11px;
}

.dropdown {
    display: flex;
    flex: 1;
    align-items: center;
    height: 28px;
    padding: 0 2px;
    background-color: #cacaca;
    color: #222;
}

.dropdown select {
    flex: 1;
    appearance: none;
    min-width: 0;
    padding-left: 4px;
    background: none;
    color: #444;
}

.row input[type="text"] {
    flex: 1;
    min-width: 0;
    height: 19px;
    margin-left: 4px;
    padding: 0 2px;
    background-color: #fff;
    outline: 1px solid #ccc;
}

.row input[type="checkbox"] {
    appearance: none;
    display: grid;
    place-items: center;
    width: 16px;
    height: 16px;
    margin-left: 4px;
    border: 1px solid #222;
    border-radius: 3px;
    background: linear-gradient(#bbb, #eee);
}

.row input[type="checkbox"]::before {
    content: "";
    width: 5px;
    height: 10px;
    margin-bottom: 3px;
    border: solid #000;
    border-width: 0 2px 2px 0;
    transform: rotate(40deg);
}

.more {
    display: flex;
    margin-left: 4px;
    padding-right: 2px;
    color: #222;
}

.spin {
    display: flex;
    flex-direction: column;
    gap: 1px;
    margin-left: 1px;
}

.spin button {
    display: grid;
    place-items: center;
    width: 14px;
    height: 10px;
    background-color: #ececec;
}

.spin button::before {
    content: "";
    border: 3px solid transparent;
    border-top: none;
    border-bottom: 4px solid #111;
}

.spin button:last-child::before {
    transform: rotate(180deg);
}

.panel-foot {
    display: flex;
    align-items: center;
    gap: 8px;
    height: 44px;
    padding: 0 12px 0 15px;
    background-color: #d2d2d2;
    border-top: 1px solid #aaa;
}

.panel-foot svg {
    margin-right: auto;
}

.panel-foot button {
    width: 73px;
    height: 23px;
    background-color: #e9e9e9;
    border: 1px solid #b8b8b8;
    color: #555;
    line-height: 20px;
}

/* floating pieces */
.tooltip {
    position: absolute;
    top: 309px;
    left: 615px;
    padding: 1px 5px;
    background-color: #ececec;
    border: 1px solid #b5b5b5;
    box-shadow: 0 5px 12px rgba(0, 0, 0, 0.4);
    color: #000;
    font-family: "Liberation Sans", Arial, sans-serif;
    font-size: 17px;
}

.quick-edit {
    position: absolute;
    top: 692px;
    left: 563px;
    display: flex;
    align-items: center;
    width: 235px;
    height: 26px;
    padding-left: 11px;
    background-color: #c9c9c9;
    color: #222;
}

.quick-edit input {
    width: 73px;
    height: 20px;
    margin-left: 12px;
    padding: 0 2px;
    background-color: #fff;
}

.quick-edit .focused {
    width: 90px;
    margin: 0 7px 0 0;
    outline: 2px solid #78ace3;
    text-align: center;
}

.caret {
    position: absolute;
    top: 6px;
    left: 69px;
    width: 1px;
    height: 15px;
    background-color: #000;
}

.side-strip {
    position: absolute;
    top: 0;
    right: 0;
    bottom: 0;
    width: 4px;
    background: linear-gradient(#c4c4c4 18px, #86ad66 18px 35px, #c4c4c4 35px 51px, #a0a0a0 51px 52px, #c4c4c4 52px);
    border-left: 1px solid #a5a5a5;
}

.frame {
    position: absolute;
    top: 15px;
    right: 34px;
    bottom: 15px;
    left: 25px;
    border: 1px solid rgba(160, 160, 160, 0.6);
    pointer-events: none;
}
```
